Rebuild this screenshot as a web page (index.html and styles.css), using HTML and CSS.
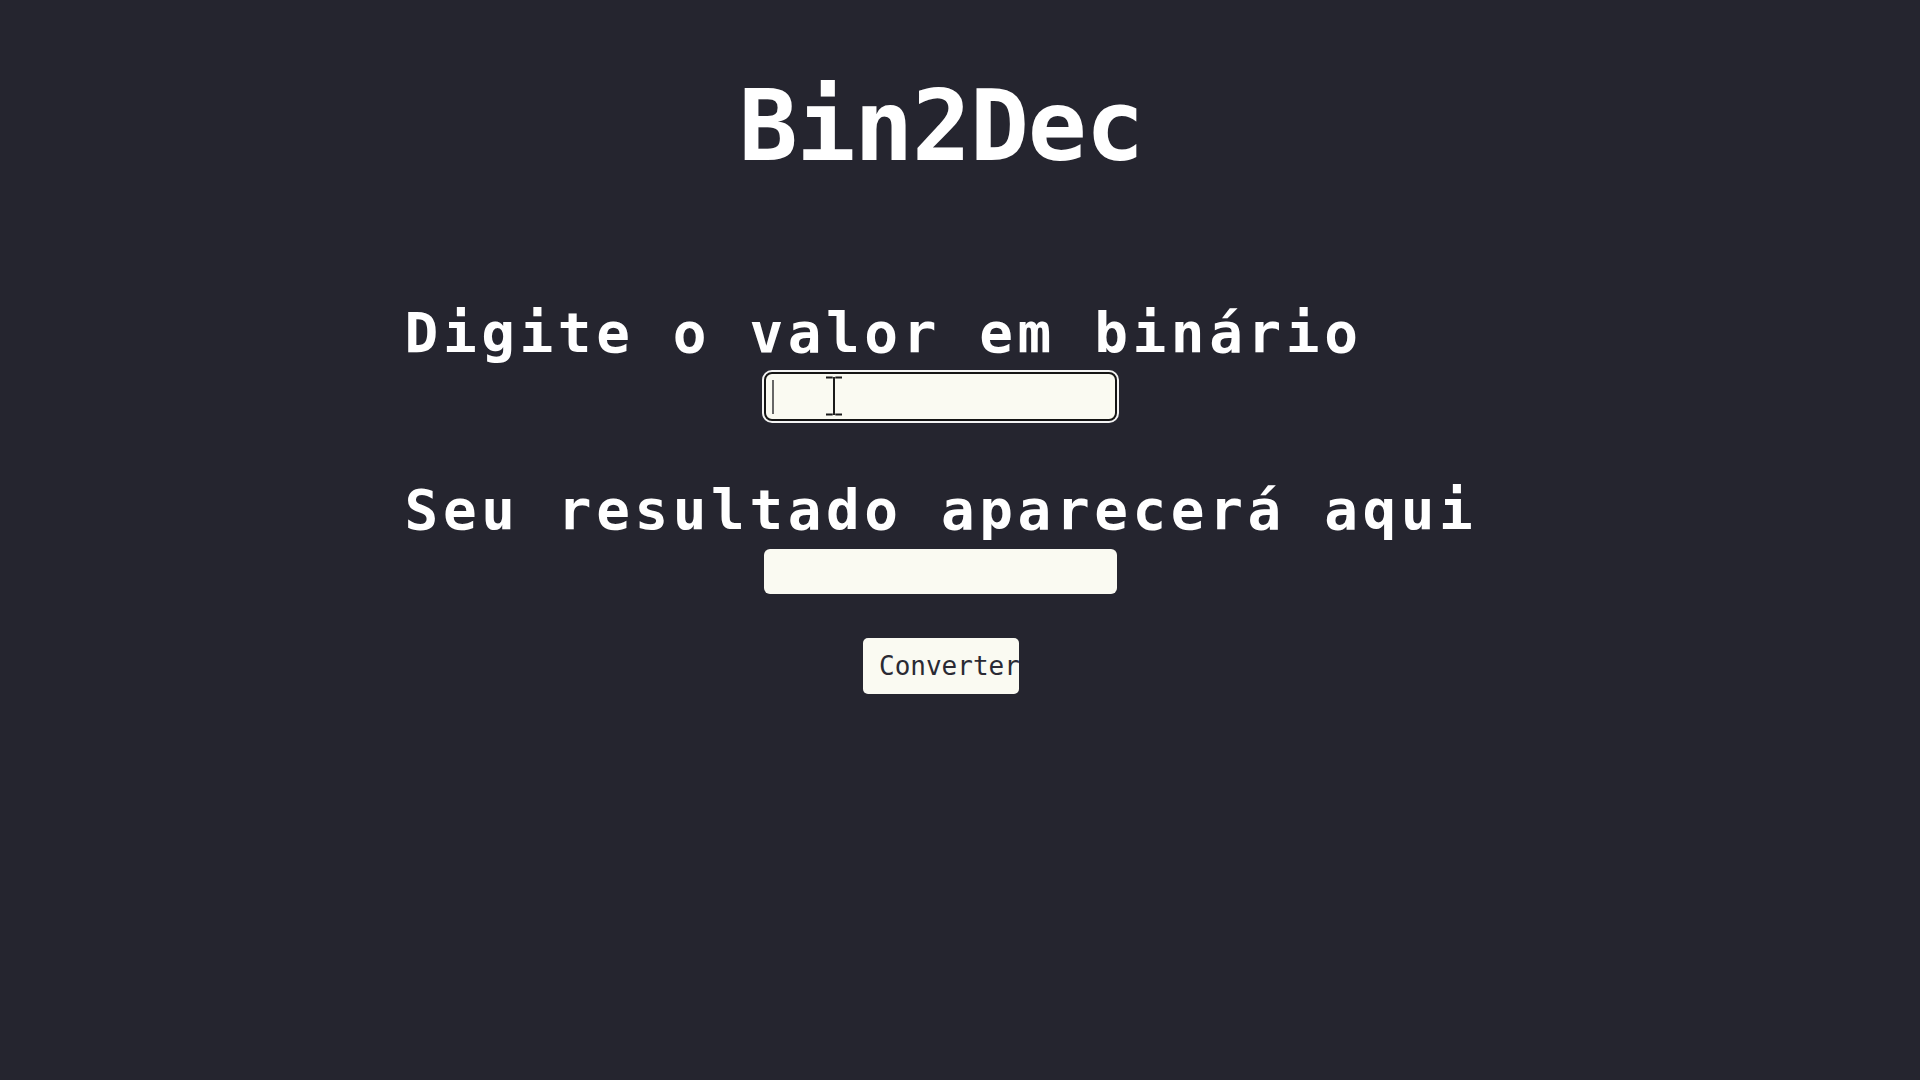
FILE: index.html
```html
<!DOCTYPE html>
<html lang="pt-BR">
<head>
<meta charset="utf-8">
<title>Bin2Dec</title>
<link rel="stylesheet" href="styles.css">
</head>
<body>
<main class="page">
  <h1 class="title">Bin2Dec</h1>
  <form class="converter" onsubmit="return false">
    <label class="label" for="bin">Digite o valor em binário</label>
    <div class="field">
      <input class="input" id="bin" type="text">
      <span class="caret"></span>
      <svg class="ibeam" width="18" height="40" viewBox="0 0 18 40" aria-hidden="true">
        <path d="M1 1.5h6.5M10.5 1.5H17M9 2.5v35M1 38.5h6.5M10.5 38.5H17" stroke="#1a1a1a" stroke-width="2" fill="none"/>
        <path d="M7.5 1.5Q9 1.5 9 3M10.5 1.5Q9 1.5 9 3M7.5 38.5Q9 38.5 9 37M10.5 38.5Q9 38.5 9 37" stroke="#1a1a1a" stroke-width="1.5" fill="none"/>
      </svg>
    </div>
    <p class="label label-result">Seu resultado aparecerá aqui</p>
    <div class="result"></div>
    <button class="button" type="button">Converter</button>
  </form>
</main>
</body>
</html>
```

FILE: styles.css
```css
html, body {
  margin: 0;
  padding: 0;
  background: #25252f;
  height: 100%;
}

.page {
  display: flex;
  flex-direction: column;
  align-items: center;
  padding-right: 38px;
  font-family: "DejaVu Sans Mono", "Liberation Mono", monospace;
  color: #ffffff;
}

.title {
  margin: 77px 0 0 0;
  font-size: 98px;
  line-height: 98px;
  font-weight: 700;
  letter-spacing: -1.2px;
}

.converter {
  display: flex;
  flex-direction: column;
  align-items: center;
  margin-top: 130px;
}

.label {
  align-self: stretch;
  margin: 0;
  font-size: 56px;
  line-height: 56px;
  font-weight: 700;
  letter-spacing: 4.6px;
  text-align: left;
  white-space: nowrap;
}

.field {
  position: relative;
  margin-top: 11px;
}

.input {
  display: block;
  box-sizing: border-box;
  width: 353px;
  height: 49px;
  margin: 0;
  padding: 0 8px;
  border: 2px solid #151515;
  border-radius: 8px;
  background: #fafaf2;
  box-shadow: 0 0 0 2px #f4f4f4;
  outline: none;
  font-family: inherit;
  font-size: 20px;
}

.caret {
  position: absolute;
  left: 8px;
  top: 8px;
  width: 2px;
  height: 34px;
  background: #666;
}

.ibeam {
  position: absolute;
  left: 61px;
  top: 4px;
}

.label-result {
  margin-top: 61px;
}

.result {
  box-sizing: border-box;
  width: 353px;
  height: 45px;
  margin-top: 11px;
  border-radius: 6px;
  background: #fafaf2;
}

.button {
  box-sizing: border-box;
  width: 156px;
  height: 56px;
  margin-top: 44px;
  padding: 0 0 0 16px;
  border: none;
  border-radius: 5px;
  background: #fafaf2;
  color: #2a2a34;
  font-family: "DejaVu Sans Mono", "Liberation Mono", monospace;
  font-size: 26px;
  text-align: left;
  white-space: nowrap;
  overflow: hidden;
  cursor: pointer;
}
```
